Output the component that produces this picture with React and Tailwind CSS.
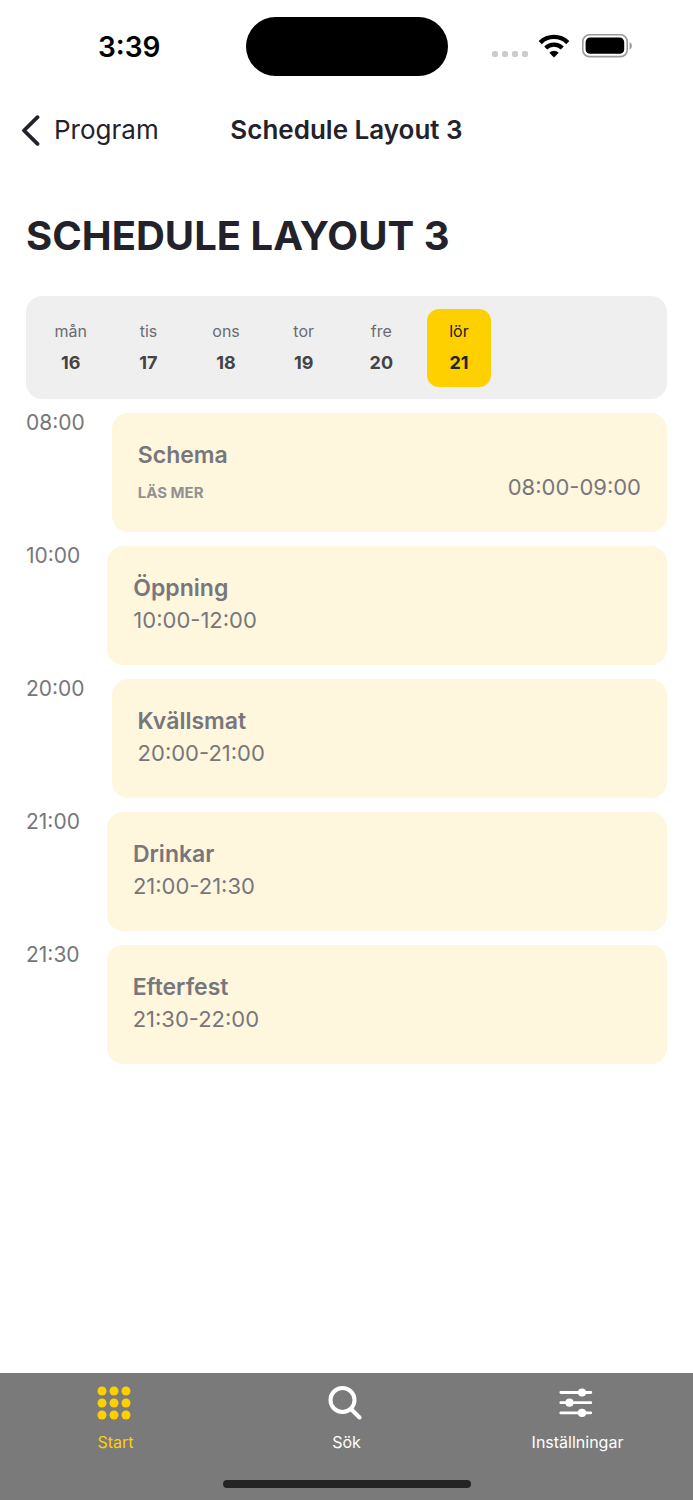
import React, { useState } from "react";

const days = [
  { label: "mån", date: 16 },
  { label: "tis", date: 17 },
  { label: "ons", date: 18 },
  { label: "tor", date: 19 },
  { label: "fre", date: 20 },
  { label: "lör", date: 21 },
];

const events = [
  { start: "08:00", title: "Schema", time: "08:00-09:00", readMore: true },
  { start: "10:00", title: "Öppning", time: "10:00-12:00" },
  { start: "20:00", title: "Kvällsmat", time: "20:00-21:00" },
  { start: "21:00", title: "Drinkar", time: "21:00-21:30" },
  { start: "21:30", title: "Efterfest", time: "21:30-22:00" },
];

const WifiIcon = () => (
  <svg className="w-8 h-6" viewBox="0 0 32 24" fill="none" aria-hidden="true">
    <path d="M2.2 8.6a19.6 19.6 0 0 1 27.6 0" stroke="#000" strokeWidth="4.4" />
    <path d="M7.7 14.1a11.8 11.8 0 0 1 16.6 0" stroke="#000" strokeWidth="4.2" />
    <path d="M16 23.4l-4.7-4.6a6.7 6.7 0 0 1 9.4 0z" fill="#000" />
  </svg>
);

const BatteryIcon = () => (
  <svg className="w-[51px] h-6" viewBox="0 0 51 24" fill="none" aria-hidden="true">
    <rect x="0.8" y="0.8" width="44.4" height="21.8" rx="6.6" stroke="#999" strokeWidth="1.6" />
    <rect x="3.6" y="3.6" width="38.6" height="16.2" rx="4.4" fill="#000" />
    <path d="M47.6 8v7.6c3-1.6 3-6 0-7.6z" fill="#999" />
  </svg>
);

const GridIcon = () => (
  <svg className="w-[34px] h-[34px]" viewBox="0 0 34 34" fill="currentColor" aria-hidden="true">
    {[5, 17, 29].map((cy) =>
      [5, 17, 29].map((cx) => <circle key={`${cx}-${cy}`} cx={cx} cy={cy} r="4.5" />)
    )}
  </svg>
);

const SearchIcon = () => (
  <svg
    className="w-[34px] h-[34px]"
    viewBox="0 0 34 34"
    fill="none"
    stroke="currentColor"
    strokeLinecap="round"
    aria-hidden="true"
  >
    <circle cx="14.5" cy="14" r="12" strokeWidth="4" />
    <path d="M23.5 23.5l8 8" strokeWidth="4" />
  </svg>
);

const SlidersIcon = () => (
  <svg
    className="w-[34px] h-[34px]"
    viewBox="0 0 34 34"
    fill="currentColor"
    stroke="currentColor"
    strokeWidth="2.8"
    strokeLinecap="round"
    aria-hidden="true"
  >
    <path d="M1.8 6.5h30M1.8 16.7h30M1.8 26.9h30" />
    <g stroke="none">
      <circle cx="23" cy="6.5" r="4.1" />
      <circle cx="10.5" cy="16.7" r="4.1" />
      <circle cx="23" cy="26.9" r="4.1" />
    </g>
  </svg>
);

const tabs = [
  { id: "start", label: "Start", Icon: GridIcon },
  { id: "search", label: "Sök", Icon: SearchIcon },
  { id: "settings", label: "Inställningar", Icon: SlidersIcon },
];

const StatusBar = () => (
  <div className="grid grid-cols-[1fr_202px_1fr] items-center pt-[17px]">
    <span className="pl-[98px] text-[28px] leading-8 font-semibold text-black">3:39</span>
    <div className="h-[59px] rounded-full bg-black"></div>
    <div className="flex items-center pl-11 pb-0.5">
      <div className="flex gap-1 pt-4">
        <span className="w-1.5 h-1.5 rounded-xs bg-[#ccc]"></span>
        <span className="w-1.5 h-1.5 rounded-xs bg-[#ccc]"></span>
        <span className="w-1.5 h-1.5 rounded-xs bg-[#ccc]"></span>
        <span className="w-1.5 h-1.5 rounded-xs bg-[#ccc]"></span>
      </div>
      <div className="flex items-center gap-3 pl-2.5">
        <WifiIcon />
        <BatteryIcon />
      </div>
    </div>
  </div>
);

const EventCard = ({ event }) => (
  <li className="flex items-start gap-[27px]">
    <span className="text-[21px] leading-5 text-[#77777b]">{event.start}</span>
    <div className="flex-1 flex items-start justify-between min-h-[119px] rounded-2xl bg-[#fff6de] px-[26px] pt-[26px] text-[#77777b]">
      <div>
        <h2 className="text-[23px] leading-8 font-semibold">{event.title}</h2>
        {event.readMore ? (
          <a href="#schema" className="block pt-3 text-[15px] leading-5 font-bold text-[#929292]">
            LÄS MER
          </a>
        ) : (
          <p className="text-[22px] leading-8">{event.time}</p>
        )}
      </div>
      {event.readMore && <p className="pt-8 text-[22px] leading-8">{event.time}</p>}
    </div>
  </li>
);

const App = () => {
  const [selected, setSelected] = useState(21);
  const [activeTab, setActiveTab] = useState("start");

  return (
    <div className="min-h-screen flex flex-col bg-white font-['Inter',sans-serif] text-[#23222b]">
      <StatusBar />

      {/* Navigation */}
      <header className="grid grid-cols-[1fr_auto_1fr] items-center pt-9 text-[26px] leading-9">
        <a href="#program" className="flex items-center gap-3.5 pl-[21px]">
          <svg
            className="w-[19px] h-[31px]"
            viewBox="0 0 19 31"
            fill="none"
            stroke="currentColor"
            strokeWidth="3.8"
            strokeLinecap="round"
            strokeLinejoin="round"
            aria-hidden="true"
          >
            <path d="M16.5 2.2L3 15.5l13.5 13.3" />
          </svg>
          Program
        </a>
        <span className="font-semibold">Schedule Layout 3</span>
      </header>

      <main className="flex-1 px-[26px] pt-16">
        <h1 className="text-[40px] leading-12 font-bold">SCHEDULE LAYOUT 3</h1>

        {/* Days */}
        <div className="mt-9 grid grid-cols-8 rounded-2xl bg-[#efefef] pt-[13px] pb-3 pl-1.5 pr-3.5">
          {days.map((day) => (
            <button
              key={day.date}
              type="button"
              onClick={() => setSelected(day.date)}
              className={
                selected === day.date
                  ? "justify-self-center w-16 rounded-xl bg-[#ffd000] pt-1.5 pb-2 text-[#23222b]"
                  : "justify-self-center w-16 rounded-xl pt-1.5 pb-2 text-[#444]"
              }
            >
              <span
                className={
                  selected === day.date
                    ? "block text-[16px] leading-8"
                    : "block text-[16px] leading-8 text-[#6b6b6f]"
                }
              >
                {day.label}
              </span>
              <span className="block text-[18px] leading-8 font-bold">{day.date}</span>
            </button>
          ))}
        </div>

        {/* Events */}
        <ul className="mt-3.5 flex flex-col gap-3.5">
          {events.map((event) => (
            <EventCard key={event.start} event={event} />
          ))}
        </ul>
      </main>

      {/* Tab bar */}
      <footer className="bg-[#7a7a7a] pt-[13px] pb-3">
        <nav className="grid grid-cols-3">
          {tabs.map(({ id, label, Icon }) => (
            <button
              key={id}
              type="button"
              onClick={() => setActiveTab(id)}
              className={
                activeTab === id
                  ? "flex flex-col items-center gap-3 text-[16px] leading-5 text-[#ffd000]"
                  : "flex flex-col items-center gap-3 text-[16px] leading-5 text-white"
              }
            >
              <span className="pr-[3px]">
                <Icon />
              </span>
              {label}
            </button>
          ))}
        </nav>
        <div className="mx-auto mt-7 h-2 w-[248px] rounded-full bg-[#242424]"></div>
      </footer>
    </div>
  );
};

export default App;
